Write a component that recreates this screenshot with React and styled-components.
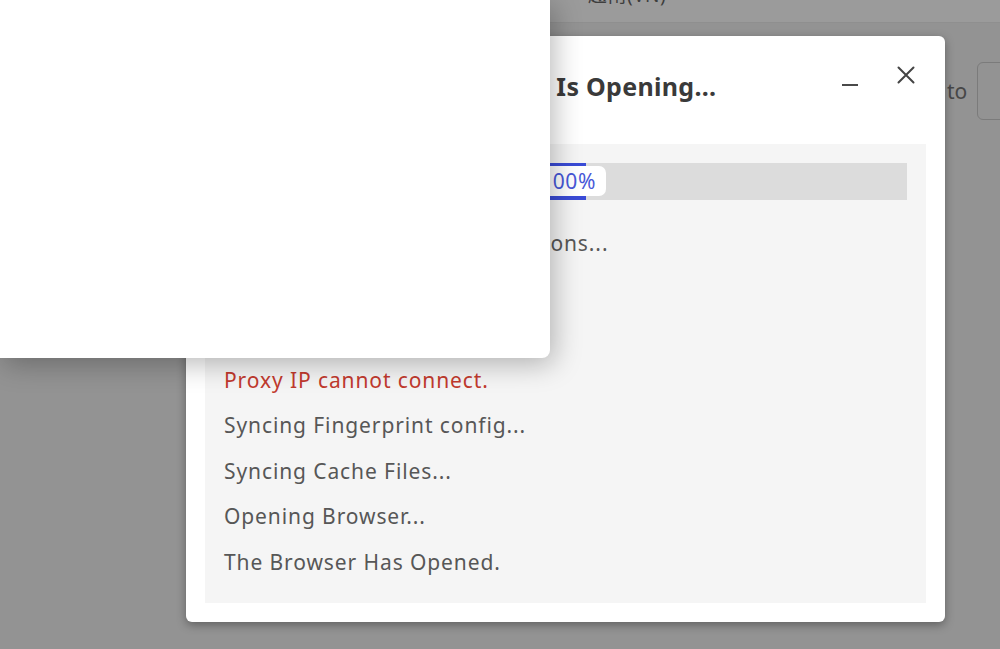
import React from "react";
import styled, { createGlobalStyle } from "styled-components";

const GlobalStyle = createGlobalStyle`
  html, body {
    margin: 0;
    padding: 0;
    width: 1000px;
    height: 649px;
    overflow: hidden;
    background: #939393;
    font-family: "Noto Sans", "Open Sans", "Noto Sans CJK SC", sans-serif;
  }
`;

const steps = [
  { text: "Checking Browser Kernel Versions..." },
  { text: "Checking Proxy..." },
  { text: "Connecting Proxy IP..." },
  { text: "Proxy IP cannot connect.", error: true },
  { text: "Syncing Fingerprint config..." },
  { text: "Syncing Cache Files..." },
  { text: "Opening Browser..." },
  { text: "The Browser Has Opened." },
];

const App = () => {
  return (
    <Screen>
      <GlobalStyle />

      {/* page behind the dialog, dimmed by the mask */}
      <BackPage>
        <TopTabs>
          <Tab>越南(VN)</Tab>
        </TopTabs>
        <FilterRow>
          <FilterLabel>to</FilterLabel>
          <FilterInput />
        </FilterRow>
      </BackPage>

      <Dialog>
        <DialogHead>
          <Title>Browser Profile VN-Proxy-A Is Opening...</Title>
          <HeadActions>
            <IconButton aria-label="minimize">
              <svg width="18" height="18" viewBox="0 0 18 18">
                <path d="M1 9h16" stroke="#4a4a4a" strokeWidth="2" />
              </svg>
            </IconButton>
            <IconButton aria-label="close">
              <svg width="20" height="20" viewBox="0 0 20 20">
                <path
                  d="M2.5 2.5l15 15M17.5 2.5l-15 15"
                  stroke="#444"
                  strokeWidth="2"
                  strokeLinecap="round"
                />
              </svg>
            </IconButton>
          </HeadActions>
        </DialogHead>

        <LogBox>
          <Progress>
            <ProgressFill style={{ width: "362px" }} />
            <ProgressLabel>100%</ProgressLabel>
          </Progress>
          <StepList>
            {steps.map((s) => (
              <Step key={s.text} $error={s.error}>
                {s.text}
              </Step>
            ))}
          </StepList>
        </LogBox>
      </Dialog>

      {/* another window lying over the dialog */}
      <FloatingPanel />
    </Screen>
  );
};

const Screen = styled.div`
  position: relative;
  width: 1000px;
  height: 649px;
  overflow: hidden;
  background: #939393;
`;

const BackPage = styled.div`
  display: flex;
  flex-direction: column;
`;

const TopTabs = styled.div`
  height: 22px;
  background: #9b9b9b;
  border-bottom: 1px solid #8f8f8f;
  display: flex;
  align-items: flex-end;
  padding-left: 588px;
  overflow: hidden;
`;

const Tab = styled.span`
  font-size: 19px;
  line-height: 19px;
  color: #3e3e3e;
  margin-bottom: 17px;
  letter-spacing: 0.5px;
`;

const FilterRow = styled.div`
  display: flex;
  align-items: center;
  gap: 10px;
  padding: 39px 0 0 947px;
`;

const FilterLabel = styled.span`
  font-size: 21px;
  color: #474747;
`;

const FilterInput = styled.div`
  width: 60px;
  height: 56px;
  flex-shrink: 0;
  border: 1px solid #7b7b7b;
  border-radius: 6px;
  background: #939393;
`;

const Dialog = styled.div`
  position: absolute;
  left: 186px;
  top: 36px;
  width: 759px;
  height: 586px;
  box-sizing: border-box;
  background: #fff;
  border-radius: 6px;
  box-shadow: 0 3px 10px rgba(0, 0, 0, 0.35);
  display: flex;
  flex-direction: column;
  padding: 0 19px 19px;
`;

const DialogHead = styled.div`
  height: 108px;
  display: flex;
  align-items: flex-start;
  justify-content: space-between;
`;

const Title = styled.h2`
  margin: 33px 0 0 0;
  font-size: 25px;
  font-weight: 700;
  color: #3a3a3a;
  white-space: nowrap;
  letter-spacing: 0.3px;
`;

const HeadActions = styled.div`
  display: flex;
  align-items: flex-start;
  gap: 37px;
  margin: 29px 10px 0 0;
`;

const IconButton = styled.button`
  border: 0;
  background: transparent;
  padding: 0;
  display: flex;
  cursor: pointer;
  &:first-child {
    margin-top: 11px;
  }
`;

const LogBox = styled.div`
  flex: 1;
  background: #f5f5f5;
  padding: 19px 19px 17px;
  display: flex;
  flex-direction: column;
`;

const Progress = styled.div`
  position: relative;
  height: 37px;
  background: #dcdcdc;
`;

const ProgressFill = styled.div`
  height: 100%;
  background: #3a4bd6;
`;

const ProgressLabel = styled.span`
  position: absolute;
  top: 3px;
  bottom: 4px;
  left: 260px;
  width: 122px;
  box-sizing: border-box;
  background: #fff;
  border-radius: 0 7px 7px 0;
  display: flex;
  align-items: center;
  justify-content: flex-end;
  padding-right: 10px;
  font-size: 21px;
  letter-spacing: 0.6px;
  color: #4858d8;
`;

const StepList = styled.ul`
  list-style: none;
  margin: 21px 0 0;
  padding: 0;
`;

const Step = styled.li`
  height: 45.5px;
  line-height: 45.5px;
  font-size: 21px;
  letter-spacing: 0.9px;
  color: ${({ $error }) => ($error ? "#c23a2e" : "#575757")};
  white-space: nowrap;
`;

const FloatingPanel = styled.div`
  position: absolute;
  left: 0;
  top: 0;
  width: 550px;
  height: 358px;
  background: #fff;
  border-radius: 0 0 8px 0;
  box-shadow: 4px 6px 28px rgba(0, 0, 0, 0.28);
`;

export default App;
